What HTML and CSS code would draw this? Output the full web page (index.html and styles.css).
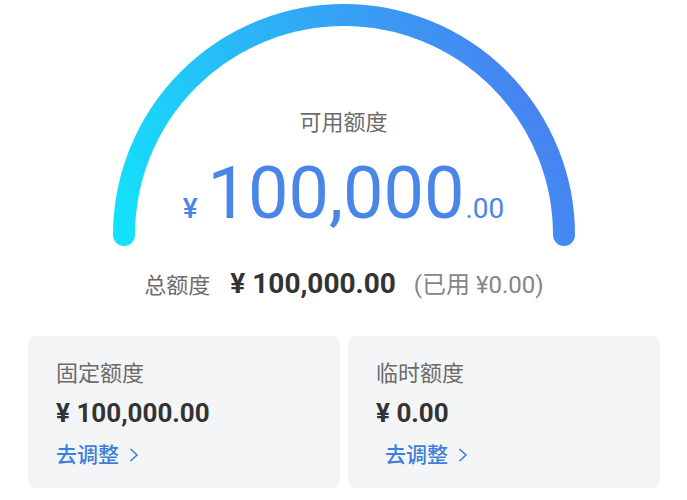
FILE: index.html
```html
<!DOCTYPE html>
<html lang="zh-CN">
<head>
    <meta charset="UTF-8">
    <meta name="viewport" content="width=device-width, initial-scale=1.0">
    <title>额度</title>
    <link rel="stylesheet" href="styles.css">
</head>
<body>

    <div class="gauge">
        <svg class="gauge-arc" width="480" height="250" viewBox="0 0 480 250">
            <defs>
                <linearGradient id="arcGrad" x1="0" y1="1" x2="1" y2="0.75">
                    <stop offset="0" stop-color="#13e2fa"/>
                    <stop offset="0.55" stop-color="#2eaff6"/>
                    <stop offset="1" stop-color="#4685f1"/>
                </linearGradient>
            </defs>
            <path d="M20 235 A220 220 0 0 1 460 235" fill="none" stroke="url(#arcGrad)" stroke-width="22" stroke-linecap="round"/>
        </svg>

        <div class="gauge-label">可用额度</div>
        <div class="gauge-amount">
            <span class="yen">¥</span><span class="int">100,000</span><span class="dec">.00</span>
        </div>
    </div>

    <div class="summary">
        <span class="summary-label">总额度</span>
        <span class="summary-total">¥ 100,000.00</span>
        <span class="summary-used">(已用 ¥0.00)</span>
    </div>

    <div class="cards">
        <div class="card">
            <div class="card-title">固定额度</div>
            <div class="card-amount">¥ 100,000.00</div>
            <a class="card-link" href="#">去调整
                <svg width="10" height="14" viewBox="0 0 10 14"><polyline points="1.5,1 8,7 1.5,13" fill="none" stroke="#3d7fd9" stroke-width="1.6"/></svg>
            </a>
        </div>
        <div class="card">
            <div class="card-title">临时额度</div>
            <div class="card-amount">¥ 0.00</div>
            <a class="card-link indent" href="#">去调整
                <svg width="10" height="14" viewBox="0 0 10 14"><polyline points="1.5,1 8,7 1.5,13" fill="none" stroke="#3d7fd9" stroke-width="1.6"/></svg>
            </a>
        </div>
    </div>

</body>
</html>
```

FILE: styles.css
```css
/* Global styles */
html, body {
    margin: 0;
    padding: 0;
    background: #ffffff;
    font-family: Roboto, "Noto Sans CJK SC", sans-serif;
    color: #333333;
}

/* Gauge */
.gauge {
    position: relative;
    height: 268px;
    display: flex;
    flex-direction: column;
    align-items: center;
    padding-top: 108px;
    box-sizing: border-box;
}

.gauge-arc {
    position: absolute;
    top: 0;
    left: 104px;
}

.gauge-label {
    font-size: 22px;
    line-height: 30px;
    color: #6b6b6b;
}

.gauge-amount {
    margin-top: 20px;
    line-height: 72px;
    color: #4a86e8;
    display: flex;
    align-items: baseline;
}

.gauge-amount .yen {
    font-size: 28px;
    font-weight: 500;
    margin-right: 10px;
}

.gauge-amount .int {
    font-size: 72px;
}

.gauge-amount .dec {
    font-size: 28px;
    margin-left: 1px;
}

/* Summary row */
.summary {
    display: flex;
    justify-content: center;
    align-items: baseline;
    line-height: 32px;
    padding-left: 1px;
}

.summary-label {
    font-size: 22px;
    color: #6b6b6b;
}

.summary-total {
    font-size: 28px;
    font-weight: bold;
    color: #333333;
    margin-left: 20px;
}

.summary-used {
    font-size: 24px;
    color: #858585;
    margin-left: 18px;
}

/* Cards */
.cards {
    display: flex;
    gap: 8px;
    margin: 34px 27px 0 28px;
}

.card {
    flex: 1;
    height: 152px;
    background: #f4f5f7;
    border-radius: 8px;
    padding: 23px 28px 0;
    box-sizing: border-box;
}

.card-title {
    font-size: 22px;
    line-height: 30px;
    color: #6b6b6b;
}

.card-amount {
    margin-top: 8px;
    font-size: 26px;
    line-height: 32px;
    font-weight: bold;
    color: #333333;
}

.card-link {
    margin-top: 11px;
    display: flex;
    align-items: center;
    gap: 10px;
    font-size: 21px;
    line-height: 30px;
    font-weight: 500;
    color: #3d7fd9;
    text-decoration: none;
}

.card-link.indent {
    padding-left: 9px;
}
```
